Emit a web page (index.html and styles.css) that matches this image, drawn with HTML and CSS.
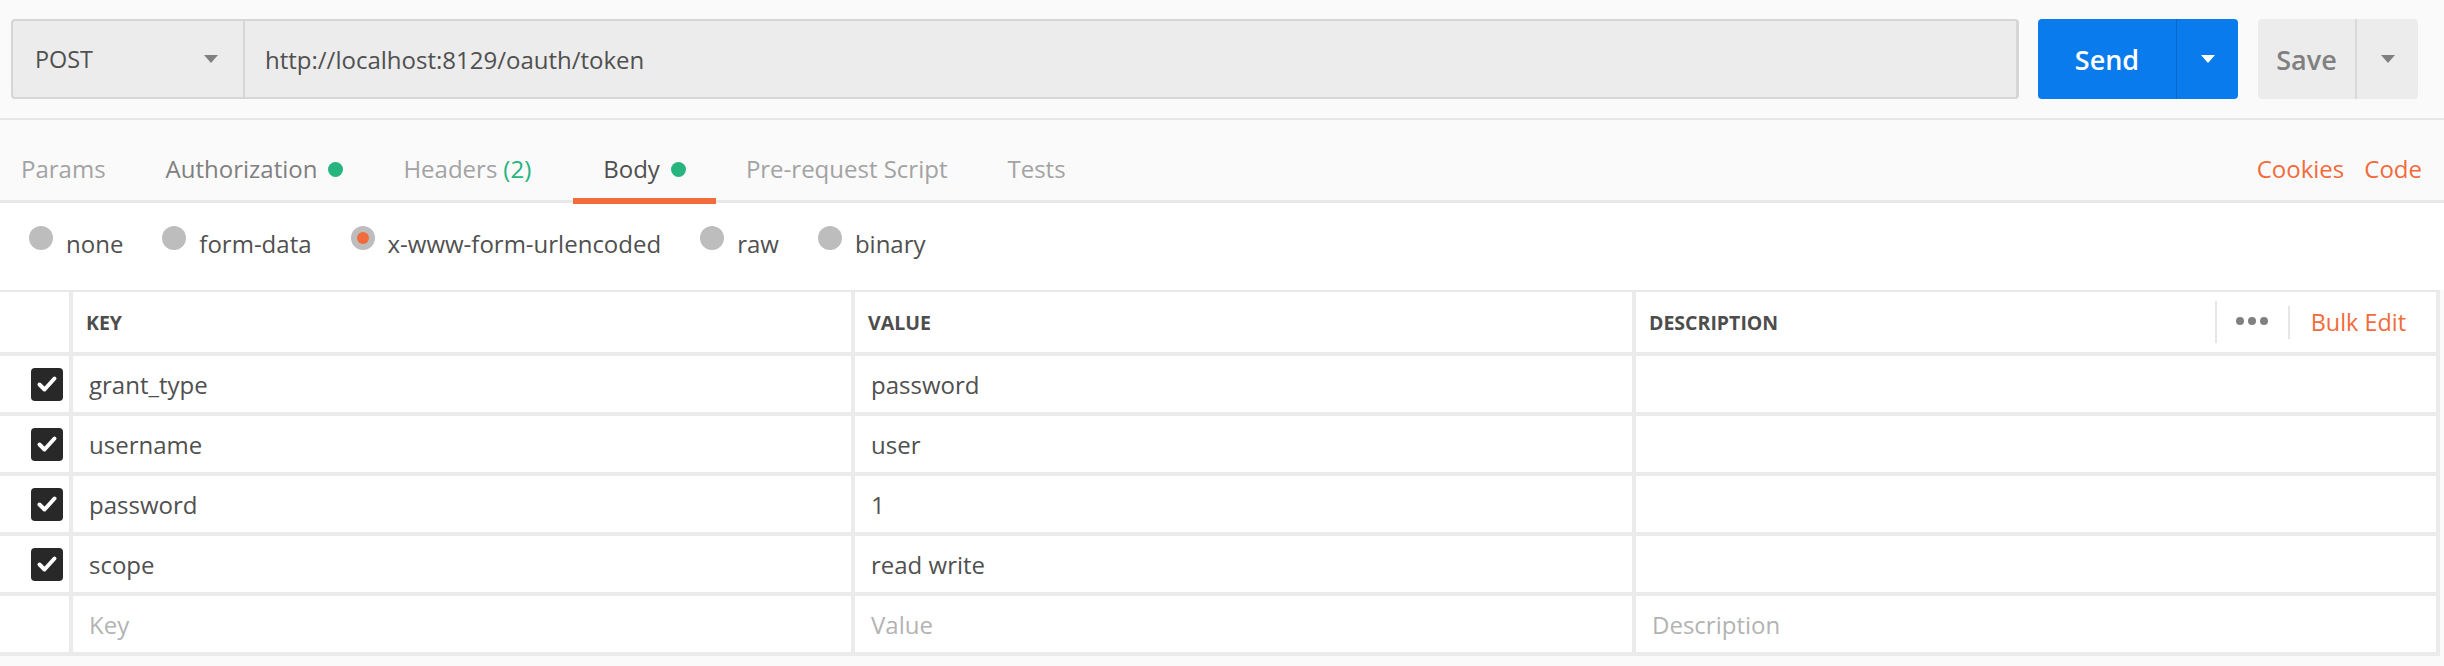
FILE: index.html
```html
<!DOCTYPE html>
<html>
<head>
<meta charset="utf-8">
<link rel="stylesheet" href="styles.css">
</head>
<body>
<div class="app">
  <div class="topbar">
    <div class="request">
      <div class="method">
        <span class="method-name">POST</span>
        <span class="caret caret-gray"></span>
      </div>
      <div class="url">http://localhost:8129/oauth/token</div>
    </div>
    <div class="btn-group btn-send">
      <span class="btn-main">Send</span>
      <span class="btn-drop"><span class="caret caret-white"></span></span>
    </div>
    <div class="btn-group btn-save">
      <span class="btn-main">Save</span>
      <span class="btn-drop"><span class="caret caret-gray"></span></span>
    </div>
  </div>

  <div class="tabs">
    <div class="tab tab-first">Params</div>
    <div class="tab tab-dark">Authorization<span class="dot"></span></div>
    <div class="tab tab-headers">Headers <span class="count">(2)</span></div>
    <div class="tab tab-active">Body<span class="dot"></span></div>
    <div class="tab">Pre-request Script</div>
    <div class="tab">Tests</div>
    <div class="tab-links">
      <span class="link">Cookies</span>
      <span class="link">Code</span>
    </div>
  </div>

  <div class="radios">
    <label class="radio"><span class="circle"></span>none</label>
    <label class="radio"><span class="circle"></span>form-data</label>
    <label class="radio"><span class="circle circle-on"></span>x-www-form-urlencoded</label>
    <label class="radio"><span class="circle"></span>raw</label>
    <label class="radio"><span class="circle"></span>binary</label>
  </div>

  <div class="kv-table">
    <div class="cell head"></div>
    <div class="cell head th">KEY</div>
    <div class="cell head th">VALUE</div>
    <div class="cell head th th-desc">
      <span>DESCRIPTION</span>
      <div class="head-tools">
        <span class="vsep vsep-tall"></span>
        <span class="dots"><i></i><i></i><i></i></span>
        <span class="vsep"></span>
        <span class="bulk">Bulk Edit</span>
      </div>
    </div>

    <div class="cell chk"><span class="checkbox"><svg width="22" height="18" viewBox="0 0 22 18"><path d="M3.5 9.5 L8.5 14.5 L18.5 3.5" fill="none" stroke="#fff" stroke-width="4" stroke-linecap="round" stroke-linejoin="round"/></svg></span></div>
    <div class="cell td">grant_type</div>
    <div class="cell td">password</div>
    <div class="cell td"></div>

    <div class="cell chk"><span class="checkbox"><svg width="22" height="18" viewBox="0 0 22 18"><path d="M3.5 9.5 L8.5 14.5 L18.5 3.5" fill="none" stroke="#fff" stroke-width="4" stroke-linecap="round" stroke-linejoin="round"/></svg></span></div>
    <div class="cell td">username</div>
    <div class="cell td">user</div>
    <div class="cell td"></div>

    <div class="cell chk"><span class="checkbox"><svg width="22" height="18" viewBox="0 0 22 18"><path d="M3.5 9.5 L8.5 14.5 L18.5 3.5" fill="none" stroke="#fff" stroke-width="4" stroke-linecap="round" stroke-linejoin="round"/></svg></span></div>
    <div class="cell td">password</div>
    <div class="cell td">1</div>
    <div class="cell td"></div>

    <div class="cell chk"><span class="checkbox"><svg width="22" height="18" viewBox="0 0 22 18"><path d="M3.5 9.5 L8.5 14.5 L18.5 3.5" fill="none" stroke="#fff" stroke-width="4" stroke-linecap="round" stroke-linejoin="round"/></svg></span></div>
    <div class="cell td">scope</div>
    <div class="cell td">read write</div>
    <div class="cell td"></div>

    <div class="cell chk"></div>
    <div class="cell td ph">Key</div>
    <div class="cell td ph">Value</div>
    <div class="cell td ph">Description</div>
  </div>
</div>
</body>
</html>
```

FILE: styles.css
```css
* { box-sizing: border-box; }

html, body {
  margin: 0;
  padding: 0;
  background: #fafafa;
}

body {
  font-family: "Open Sans", "Noto Sans", sans-serif;
  font-size: 24px;
  color: #505050;
  width: 2444px;
  height: 666px;
  overflow: hidden;
}

/* ---------- top bar ---------- */
.topbar {
  display: flex;
  align-items: stretch;
  padding: 19px 26px 19px 11px;
  height: 120px;
  border-bottom: 2px solid #e6e6e6;
}

.request {
  flex: 1;
  display: flex;
  background: #ececec;
  border: 2px solid #d6d6d6;
  border-right-width: 3px;
  border-radius: 4px;
  margin-right: 19px;
}

.method {
  width: 232px;
  display: flex;
  align-items: center;
  justify-content: space-between;
  padding: 0 25px 0 22px;
  border-right: 2px solid #d6d6d6;
}

.method-name { color: #505050; font-size: 23.4px; }

.url {
  display: flex;
  align-items: center;
  padding-left: 20px;
  color: #505050;
}

.caret {
  display: inline-block;
  width: 0;
  height: 0;
  border-left: 7.5px solid transparent;
  border-right: 7.5px solid transparent;
  border-top: 8px solid #808080;
}
.caret-white { border-top-color: #ffffff; }

.btn-group {
  display: flex;
  border-radius: 4px;
  font-size: 27px;
  font-weight: 600;
}
.btn-main, .btn-drop {
  display: flex;
  align-items: center;
  justify-content: center;
}

.btn-send {
  background: #097bed;
  color: #ffffff;
  width: 200px;
  margin-right: 20px;
}
.btn-send .btn-main {
  width: 139px;
  border-right: 1px solid #0768c9;
}
.btn-send .btn-drop { flex: 1; }

.btn-save {
  background: #ececec;
  color: #808080;
  width: 160px;
}
.btn-save .btn-main {
  width: 99px;
  border-right: 2px solid #d9d9d9;
}
.btn-save .btn-drop { flex: 1; }

/* ---------- tabs ---------- */
.tabs {
  display: flex;
  height: 83px;
  padding-right: 22px;
  border-bottom: 3px solid #e8e8e8;
}

.tab {
  position: relative;
  display: flex;
  align-items: center;
  padding: 16px 30px 0 30px;
  color: #a3a3a3;
  white-space: nowrap;
}
.tab-first { padding-left: 21px; }
.tab-dark { color: #808080; }
.tab-headers { padding-right: 42px; }
.tab-active { color: #505050; }
.tab-active::after {
  content: "";
  position: absolute;
  left: 0;
  right: 0;
  bottom: -4px;
  height: 6px;
  background: #f26b3a;
}

.count { color: #26b47f; margin-left: 6px; }

.dot {
  display: inline-block;
  width: 15px;
  height: 15px;
  border-radius: 50%;
  background: #26b47f;
  margin-left: 11px;
  margin-top: 2px;
}

.tab-links {
  margin-left: auto;
  display: flex;
  align-items: center;
  gap: 20px;
  padding-top: 16px;
}
.link { color: #f26b3a; }

/* ---------- radios ---------- */
.radios {
  display: flex;
  align-items: center;
  gap: 39px;
  height: 87px;
  padding: 0 0 7px 29px;
  background: #ffffff;
}

.radio {
  display: flex;
  align-items: center;
  color: #505050;
}

.circle {
  width: 24px;
  height: 24px;
  border-radius: 50%;
  background: #bdbdbd;
  margin-right: 13px;
  margin-bottom: 10px;
  display: flex;
  align-items: center;
  justify-content: center;
}
.circle-on::after {
  content: "";
  width: 12px;
  height: 12px;
  border-radius: 50%;
  background: #f26b3a;
}

/* ---------- key/value table ---------- */
.kv-table {
  width: 2440px;
  display: grid;
  grid-template-columns: 69px 778px 777px 800px;
  grid-template-rows: 60px repeat(5, 56px);
  column-gap: 4px;
  row-gap: 4px;
  background: #ebebeb;
  border-top: 2px solid #e8e8e8;
  padding: 0 4px 4px 0;
}

.cell {
  background: #ffffff;
  display: flex;
  align-items: center;
}

.th {
  font-size: 19.5px;
  font-weight: 700;
  color: #4d4d4d;
  padding-left: 13px;
}

.th-desc {
  justify-content: space-between;
  padding-right: 30px;
}

.head-tools {
  display: flex;
  align-items: center;
}

.vsep {
  width: 2px;
  height: 33px;
  background: #e6e6e6;
}
.vsep-tall { height: 42px; }

.dots {
  display: flex;
  gap: 4px;
  margin: 0 20px 0 19px;
  padding-bottom: 2px;
}
.dots i {
  display: block;
  width: 8px;
  height: 8px;
  border-radius: 50%;
  background: #808080;
}

.bulk {
  color: #f26b3a;
  font-weight: 400;
  font-size: 23.4px;
  margin-left: 21px;
}

.td {
  padding-left: 16px;
  color: #505050;
}
.ph { color: #b3b3b3; }

.chk {
  justify-content: flex-end;
  padding-right: 6px;
}

.checkbox {
  width: 32px;
  height: 33px;
  border-radius: 4px;
  background: #282828;
  display: flex;
  align-items: center;
  justify-content: center;
}
```
